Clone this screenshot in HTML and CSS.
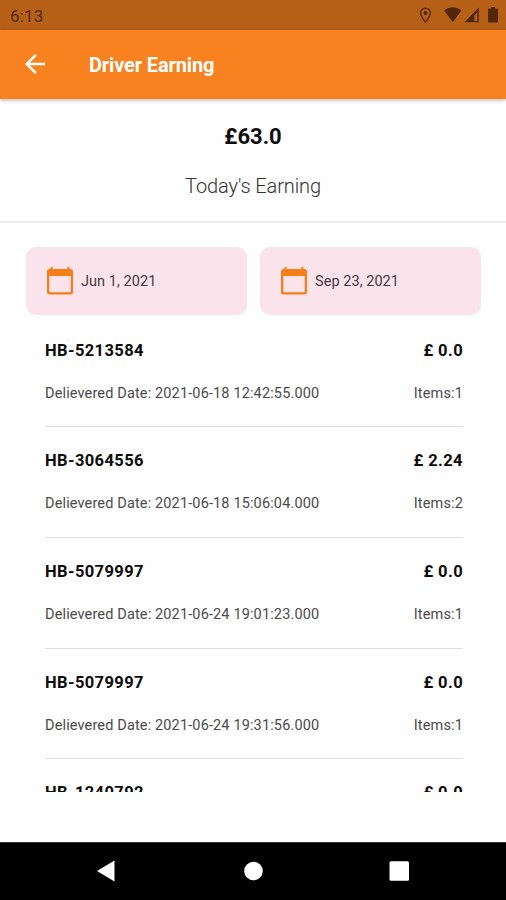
FILE: index.html
```html
<!DOCTYPE html>
<html lang="en">
<head>
<meta charset="utf-8">
<title>Driver Earning</title>
<link rel="stylesheet" href="styles.css">
</head>
<body>
<div class="status">
  <span class="clock">6:13</span>
  <svg class="status-icons" viewBox="0 0 90 30" width="90" height="30">
    <path d="M9.500 8.200a4.800 4.800 0 0 0-4.800 4.800c0 3.500 4.800 9 4.800 9s4.800-5.500 4.800-9a4.800 4.800 0 0 0-4.800-4.800z" fill="none" stroke="#51290a" stroke-width="1.400"/>
    <circle cx="9.500" cy="13" r="1.900"/>
    <path d="M28 10.300Q36.500 4.300 45.500 10.300L36.700 22.300z"/>
    <path d="M48.500 22.300L62.800 7.500V22.300H61.300V12.500L58.300 15.500V22.300z"/>
    <path d="M61 20.900H58V22.300H62.800z"/>
    <path d="M73 8.500h2V7h4v1.500h2q1 0 1 1V21.500q0 1-1 1h-8q-1 0-1-1v-12q0-1 1-1z"/>
  </svg>
</div>
<header class="appbar">
  <svg class="back" viewBox="0 0 24 24" width="30" height="30"><path d="M20 11H7.830l5.590-5.590L12 4l-8 8 8 8 1.410-1.410L7.830 13H20v-2z"/></svg>
  <h1>Driver Earning</h1>
</header>
<section class="summary">
  <div class="total">£63.0</div>
  <div class="caption">Today's Earning</div>
</section>
<section class="dates">
  <div class="date">
    <svg viewBox="0 0 26 28" width="26" height="28"><path d="M3.500 0h2.200v2h14.600V0h2.200v2h1Q26 2 26 4.500v20.500q0 2.500-2.500 2.500h-21Q0 27.500 0 25V4.500Q0 2 2.500 2h1zM2.300 9v15.200q0 1 1 1h19.400q1 0 1-1V9z"/></svg>
    <span>Jun 1, 2021</span>
  </div>
  <div class="date">
    <svg viewBox="0 0 26 28" width="26" height="28"><path d="M3.500 0h2.200v2h14.600V0h2.200v2h1Q26 2 26 4.500v20.500q0 2.500-2.500 2.500h-21Q0 27.500 0 25V4.500Q0 2 2.500 2h1zM2.300 9v15.200q0 1 1 1h19.400q1 0 1-1V9z"/></svg>
    <span>Sep 23, 2021</span>
  </div>
</section>
<main class="orders">
  <article class="order">
    <div class="line main"><span>HB-5213584</span><span>£ 0.0</span></div>
    <div class="line sub"><span>Delievered Date: 2021-06-18 12:42:55.000</span><span>Items:1</span></div>
  </article>
  <article class="order">
    <div class="line main"><span>HB-3064556</span><span>£ 2.24</span></div>
    <div class="line sub"><span>Delievered Date: 2021-06-18 15:06:04.000</span><span>Items:2</span></div>
  </article>
  <article class="order">
    <div class="line main"><span>HB-5079997</span><span>£ 0.0</span></div>
    <div class="line sub"><span>Delievered Date: 2021-06-24 19:01:23.000</span><span>Items:1</span></div>
  </article>
  <article class="order">
    <div class="line main"><span>HB-5079997</span><span>£ 0.0</span></div>
    <div class="line sub"><span>Delievered Date: 2021-06-24 19:31:56.000</span><span>Items:1</span></div>
  </article>
  <article class="order">
    <div class="line main"><span>HB-1240792</span><span>£ 0.0</span></div>
  </article>
</main>
<nav class="navbar">
  <svg viewBox="0 0 506 58" width="506" height="58">
    <path d="M97 29L114.500 18.500V39.500z"/>
    <circle cx="253.500" cy="29" r="9.300"/>
    <rect x="389.500" y="19.200" width="19.500" height="19.600" rx="1.500"/>
  </svg>
</nav>
</body>
</html>
```

FILE: styles.css
```css
* { box-sizing: border-box; }
body {
  margin: 0;
  width: 506px;
  height: 900px;
  overflow: hidden;
  display: flex;
  flex-direction: column;
  background: #fefefe;
  color: #0c0c0c;
  font-family: Roboto, "Liberation Sans", sans-serif;
}
svg { display: block; flex: none; }
.status {
  flex: none;
  height: 30px;
  display: flex;
  align-items: center;
  justify-content: space-between;
  padding: 2px 0 0 10px;
  background: #b66117;
  color: #51290a;
}
.clock { font-size: 17px; letter-spacing: 0.2px; }
.status-icons { fill: #51290a; margin: -2px 0 0; }
.appbar {
  flex: none;
  height: 68.500px;
  display: flex;
  align-items: center;
  padding-left: 20px;
  background: #f7821f;
  color: #fff;
  box-shadow: 0 1px 4px rgba(0, 0, 0, 0.3);
}
.back { fill: #fff; }
.appbar h1 { margin: 1px 0 0 39px; font-size: 20px; font-weight: 700; letter-spacing: -0.13px; }
.summary {
  flex: none;
  height: 124px;
  padding-top: 23px;
  text-align: center;
  border-bottom: 2px solid #ececec;
}
.total { font-size: 22px; line-height: 30px; font-weight: 700; }
.caption { margin-top: 19px; font-size: 20px; line-height: 30px; font-weight: 300; letter-spacing: -0.12px; color: #333; }
.dates {
  flex: none;
  display: flex;
  gap: 13px;
  padding: 24.500px 25px 0 26px;
}
.date {
  flex: 1;
  height: 68px;
  display: flex;
  align-items: center;
  gap: 8px;
  padding-left: 21px;
  border-radius: 10px;
  background: #fae3ea;
  color: #44393e;
  font-size: 14.500px;
  letter-spacing: 0.05px;
}
.date svg { fill: #f57f17; }
.orders {
  flex: none;
  height: 477px;
  overflow: hidden;
  padding: 1.600px 43px 0 45px;
}
.order { height: 110.670px; padding-top: 23.200px; border-bottom: 1.500px solid #dedede; }
.line { display: flex; justify-content: space-between; line-height: 22px; white-space: nowrap; }
.main { font-size: 16.500px; font-weight: 700; letter-spacing: 0.4px; }
.sub { margin-top: 21px; font-size: 14.500px; letter-spacing: 0.14px; color: #4a4a4a; }
.navbar { flex: none; height: 58px; margin-top: auto; background: #000; border-top: 1px solid #333; }
.navbar svg { fill: #fff; margin-top: -1px; }
```
